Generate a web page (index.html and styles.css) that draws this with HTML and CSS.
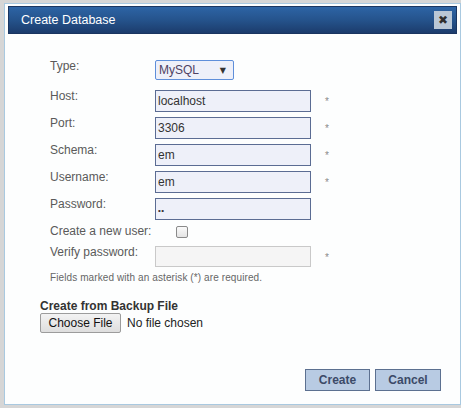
FILE: index.html
```html
<!DOCTYPE html>
<html>
<head>
<meta charset="utf-8">
<link rel="stylesheet" href="styles.css">
</head>
<body>
<div class="dialog">
  <div class="titlebar">
    <span class="title">Create Database</span>
    <span class="close">✖</span>
  </div>
  <div class="content">
    <div class="form">
      <div class="row row-type">
        <label class="lbl">Type:</label>
        <div class="select"><span class="select-text">MySQL</span><span class="arrow">▼</span></div>
      </div>
      <div class="row">
        <label class="lbl">Host:</label>
        <input class="field" type="text" value="localhost">
        <span class="req">*</span>
      </div>
      <div class="row">
        <label class="lbl">Port:</label>
        <input class="field" type="text" value="3306">
        <span class="req">*</span>
      </div>
      <div class="row">
        <label class="lbl">Schema:</label>
        <input class="field" type="text" value="em">
        <span class="req">*</span>
      </div>
      <div class="row">
        <label class="lbl">Username:</label>
        <input class="field" type="text" value="em">
        <span class="req">*</span>
      </div>
      <div class="row">
        <label class="lbl">Password:</label>
        <input class="field pw" type="text" value="••">
      </div>
      <div class="row row-check">
        <label class="lbl">Create a new user:</label>
        <input class="check" type="checkbox">
      </div>
      <div class="row">
        <label class="lbl">Verify password:</label>
        <input class="field disabled" type="text" value="">
        <span class="req">*</span>
      </div>
      <p class="note">Fields marked with an asterisk (*) are required.</p>
    </div>
    <div class="backup">
      <div class="backup-title">Create from Backup File</div>
      <div class="file">
        <span class="file-btn">Choose File</span>
        <span class="file-name">No file chosen</span>
      </div>
    </div>
  </div>
  <div class="footer">
    <button class="btn btn-create">Create</button>
    <button class="btn btn-cancel">Cancel</button>
  </div>
</div>
</body>
</html>
```

FILE: styles.css
```css
html, body {
  margin: 0;
  padding: 0;
}
body {
  background: #d6d6d6;
  font-family: "Liberation Sans", Arial, sans-serif;
  width: 461px;
  height: 408px;
  overflow: hidden;
}
.dialog {
  box-sizing: border-box;
  margin: 3px 0 0 4px;
  width: 457px;
  height: 402px;
  border: 1px solid #a9c9e0;
  background: #fdfefe;
  padding: 2px 3px 3px 3px;
  display: flex;
  flex-direction: column;
}
.titlebar {
  box-sizing: border-box;
  height: 28px;
  background: linear-gradient(to bottom, #2d64a5 0%, #25538c 50%, #1c3c6c 100%);
  border: 1px solid #1a3560;
  display: flex;
  align-items: center;
  justify-content: space-between;
  padding: 0 4px 0 12px;
}
.title {
  color: #ffffff;
  font-size: 12.5px;
  line-height: 14px;
}
.close {
  width: 18px;
  height: 18px;
  background: #b9c7d6;
  color: #2e2e2e;
  font-size: 12px;
  line-height: 18px;
  text-align: center;
  font-family: "DejaVu Sans", sans-serif;
}
.content {
  padding: 26px 0 0 0;
}
.form {
  padding-left: 42px;
}
.row {
  display: flex;
  align-items: flex-start;
  margin-bottom: 5px;
}
.row-type {
  margin-bottom: 10px;
}
.lbl {
  width: 105px;
  flex: none;
  font-size: 12px;
  line-height: 14px;
  color: #5a5a5a;
  margin-top: -1px;
}
.select {
  box-sizing: border-box;
  width: 79px;
  height: 20px;
  border: 1px solid #5f8fda;
  border-radius: 2px;
  background: #eef0f9;
  display: flex;
  align-items: center;
  justify-content: space-between;
  padding: 0 7px 0 3px;
}
.select-text {
  font-size: 12px;
  color: #4f4263;
}
.arrow {
  font-size: 8px;
  color: #333;
  font-family: "DejaVu Sans", sans-serif;
}
.field {
  box-sizing: border-box;
  width: 156px;
  height: 22px;
  margin: 0;
  border: 1px solid #5b6c93;
  background: #eef0f9;
  padding: 0 2px;
  font-family: "Liberation Sans", Arial, sans-serif;
  font-size: 12px;
  color: #333333;
  outline: none;
}
.field.pw {
  font-size: 8px;
  letter-spacing: 0.5px;
  padding-top: 2px;
}
.field.disabled {
  background: #f5f5f5;
  border-color: #c9c9c9;
  height: 21px;
}
.req {
  margin-left: 14px;
  margin-top: 7px;
  font-size: 10px;
  line-height: 10px;
  color: #8a8a8a;
}
.row-check {
  height: 16px;
}
.check {
  -webkit-appearance: none;
  appearance: none;
  box-sizing: border-box;
  width: 12px;
  height: 12px;
  margin: 1px 0 0 21px;
  border: 1px solid #8a8a8a;
  border-radius: 2px;
  background: linear-gradient(to bottom, #fafafa, #e4e4e4);
}
.note {
  margin: 5px 0 0 0;
  font-size: 10px;
  line-height: 12px;
  letter-spacing: 0.1px;
  color: #666666;
}
.backup {
  padding-left: 32px;
  margin-top: 15px;
}
.backup-title {
  font-size: 12px;
  font-weight: bold;
  line-height: 14px;
  color: #333333;
}
.file {
  display: flex;
  align-items: center;
}
.file-btn {
  box-sizing: border-box;
  width: 81px;
  height: 20px;
  border: 1px solid #9c9c9c;
  border-radius: 2px;
  background: linear-gradient(to bottom, #f3f3f3, #dedede);
  font-size: 12px;
  line-height: 18px;
  text-align: center;
  color: #111;
}
.file-name {
  margin-left: 6px;
  font-size: 12px;
  color: #222;
}
.footer {
  margin-top: auto;
  display: flex;
  justify-content: flex-end;
  gap: 5px;
  padding: 0 16px 10px 0;
}
.btn {
  box-sizing: border-box;
  height: 22px;
  margin: 0;
  border: 1px solid #5c7090;
  background: #b8cbe3;
  color: #3c4a68;
  font-family: "Liberation Sans", Arial, sans-serif;
  font-size: 12px;
  font-weight: bold;
  padding: 0;
}
.btn-create {
  width: 65px;
}
.btn-cancel {
  width: 66px;
}
```
